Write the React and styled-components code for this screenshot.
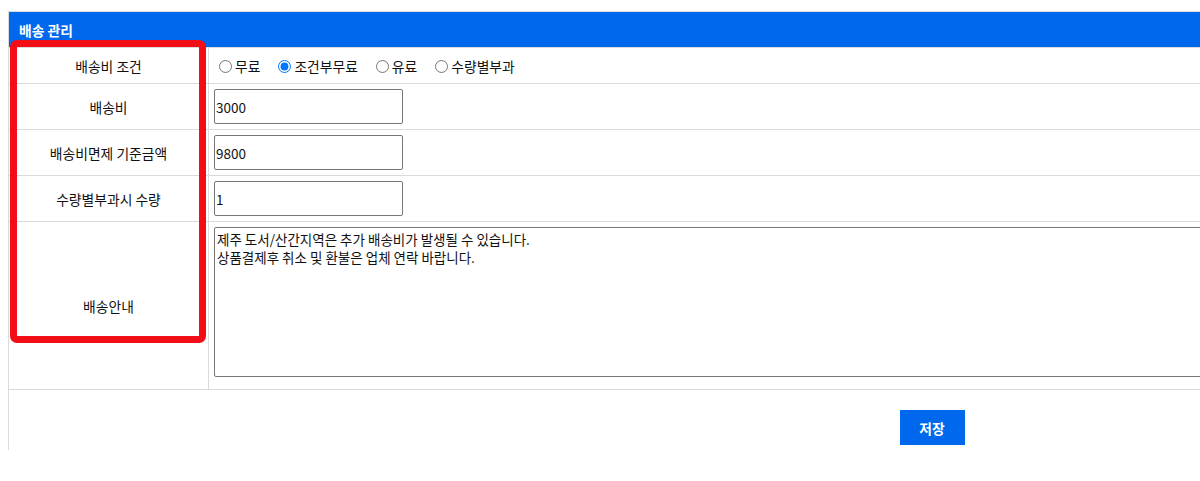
import React, { useState } from 'react'
import styled, { createGlobalStyle } from 'styled-components'

const font = '"Noto Sans CJK KR", "Noto Sans", sans-serif'

const GlobalStyle = createGlobalStyle`
  html, body {
    margin: 0;
    padding: 0;
    overflow: hidden;
    background: #fff;
  }
  body {
    padding: 8px;
    font-family: ${font};
    font-size: 13.8px;
    color: #111;
  }
`

const Panel = styled.section`
  position: relative;
  width: 1848px;
  margin-top: 3px;
  border-top: 1px solid #dadada;
  border-left: 1px solid #dadada;
`

const Header = styled.h2`
  margin: 0;
  height: 35px;
  display: flex;
  align-items: center;
  padding-left: 10px;
  background: #0068ec;
  color: #fff;
  font-size: 13.8px;
  font-weight: 700;
  border-bottom: 1px solid #dadada;
`

const Row = styled.div`
  display: grid;
  grid-template-columns: 200px 1fr;
  height: ${p => p.$height}px;
  border-bottom: 1px solid #dadada;
`

const Label = styled.div`
  display: flex;
  align-items: center;
  justify-content: center;
  border-right: 1px solid #dadada;
`

const Value = styled.div`
  display: flex;
  align-items: ${p => (p.$top ? 'flex-start' : 'center')};
  padding: ${p => (p.$top ? '5px 5px 0' : '0 5px')};
`

const RadioGroup = styled.div`
  display: flex;
  align-items: center;
`

const RadioLabel = styled.label`
  display: inline-flex;
  align-items: center;
  margin-right: 13px;
  cursor: pointer;

  input {
    margin: 1px 3px 0 5px;
    width: 13px;
    height: 13px;
  }
`

const TextInput = styled.input`
  box-sizing: border-box;
  width: 189px;
  height: 35px;
  padding: 0 1px;
  border: 1px solid #767676;
  border-radius: 2px;
  font-family: ${font};
  font-size: 13.5px;
  color: #111;
`

const Notes = styled.textarea`
  box-sizing: border-box;
  display: block;
  width: 100%;
  height: 150px;
  padding: 2px 2px;
  border: 1px solid #767676;
  border-radius: 2px;
  resize: none;
  font-family: ${font};
  font-size: 13.5px;
  line-height: 18px;
  color: #111;
`

const Footer = styled.div`
  display: flex;
  justify-content: center;
  padding: 20px 0 5px;
`

const SaveButton = styled.button`
  width: 65px;
  height: 35px;
  margin-right: 2px;
  border: 0;
  background: #0068ec;
  color: #fff;
  font-family: ${font};
  font-size: 13.8px;
  font-weight: 700;
  cursor: pointer;
`

const Highlight = styled.div`
  position: absolute;
  left: 1px;
  top: 28px;
  width: 196px;
  height: 303px;
  box-sizing: border-box;
  border: 7px solid #f20d17;
  border-radius: 7px;
  pointer-events: none;
`

const options = ['무료', '조건부무료', '유료', '수량별부과']

export default function App() {
  const [condition, setCondition] = useState('조건부무료')
  const [fee, setFee] = useState('3000')
  const [freeOver, setFreeOver] = useState('9800')
  const [qty, setQty] = useState('1')
  const [notes, setNotes] = useState(
    '제주 도서/산간지역은 추가 배송비가 발생될 수 있습니다.\n상품결제후 취소 및 환불은 업체 연락 바랍니다.'
  )

  return (
    <>
      <GlobalStyle />
      <Panel>
        <Header>배송 관리</Header>
        <Row $height={35}>
          <Label>배송비 조건</Label>
          <Value>
            <RadioGroup>
              {options.map(o => (
                <RadioLabel key={o}>
                  <input
                    type="radio"
                    name="condition"
                    checked={condition === o}
                    onChange={() => setCondition(o)}
                  />
                  {o}
                </RadioLabel>
              ))}
            </RadioGroup>
          </Value>
        </Row>
        <Row $height={45}>
          <Label>배송비</Label>
          <Value>
            <TextInput value={fee} onChange={e => setFee(e.target.value)} />
          </Value>
        </Row>
        <Row $height={45}>
          <Label>배송비면제 기준금액</Label>
          <Value>
            <TextInput value={freeOver} onChange={e => setFreeOver(e.target.value)} />
          </Value>
        </Row>
        <Row $height={45}>
          <Label>수량별부과시 수량</Label>
          <Value>
            <TextInput value={qty} onChange={e => setQty(e.target.value)} />
          </Value>
        </Row>
        <Row $height={167}>
          <Label>배송안내</Label>
          <Value $top>
            <Notes value={notes} onChange={e => setNotes(e.target.value)} />
          </Value>
        </Row>
        <Footer>
          <SaveButton>저장</SaveButton>
        </Footer>
        <Highlight />
      </Panel>
    </>
  )
}
